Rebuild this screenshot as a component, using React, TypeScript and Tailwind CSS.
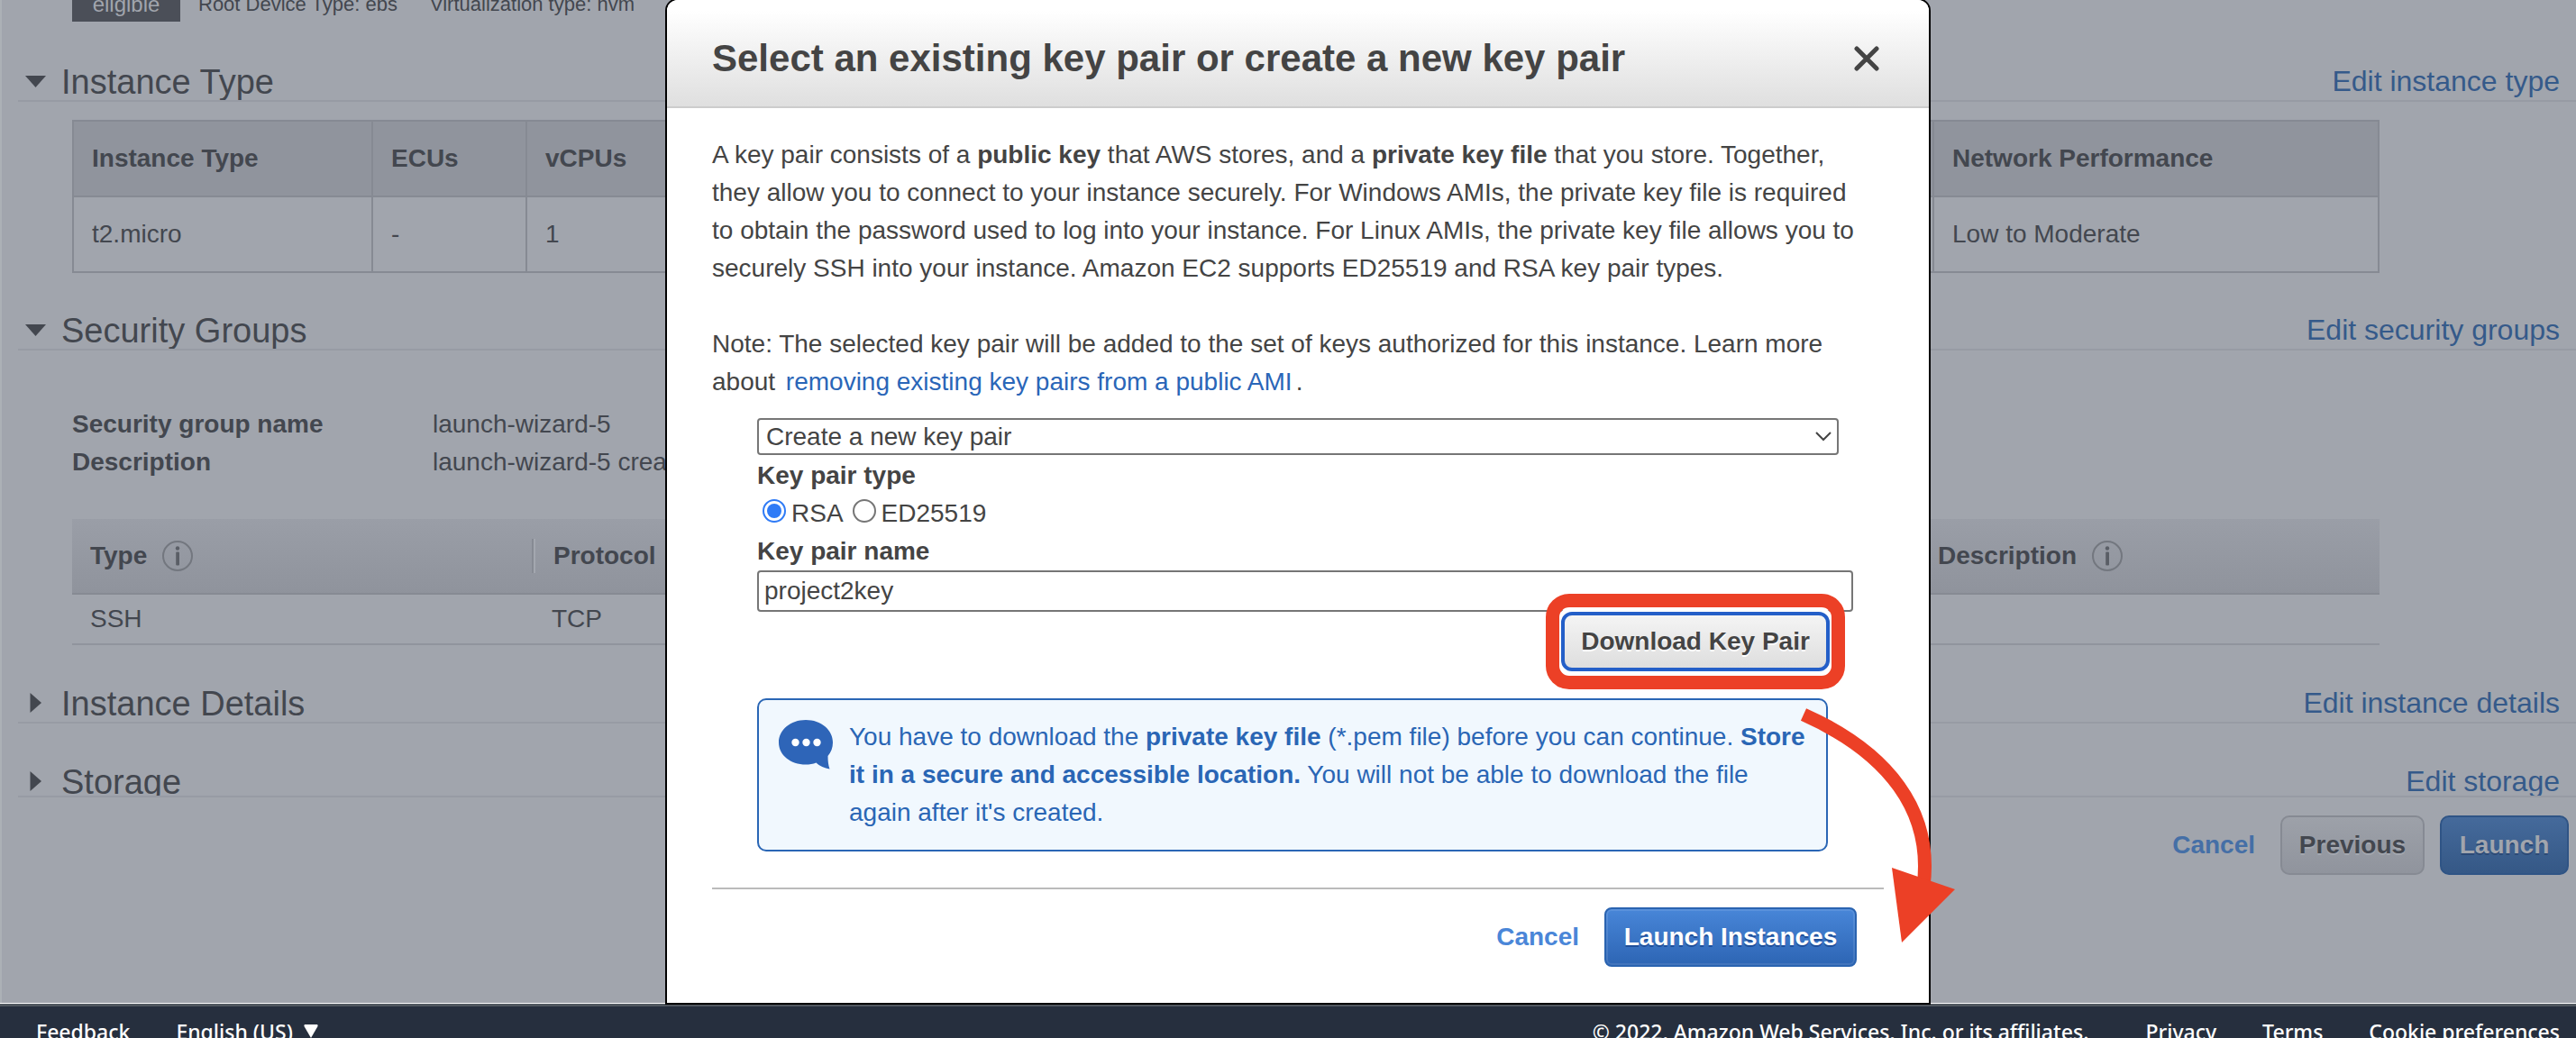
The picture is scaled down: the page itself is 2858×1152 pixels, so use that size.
import React from "react";

function InfoIcon() {
  return (
    <svg className="size-9" viewBox="0 0 36 36" fill="none" aria-hidden="true">
      <circle cx="18" cy="18" r="16" stroke="#73777f" strokeWidth="2" />
      <circle cx="18" cy="9.5" r="2.2" fill="#5a5e66" />
      <rect x="16.2" y="13.5" width="3.8" height="15" rx="1" fill="#5a5e66" />
    </svg>
  );
}

function SectionHeader({
  title,
  link,
  open = false,
  className,
}: {
  title: string;
  link: string;
  open?: boolean;
  className: string;
}) {
  return (
    <header className={"ml-5 flex items-start overflow-hidden border-b-2 border-[#979ba4] pr-[18px] " + className}>
      <svg className="mt-2 ml-2 size-6 shrink-0" viewBox="0 0 24 24" fill="#43474f" aria-hidden="true">
        {open ? <path d="M0 5H23L11.5 18Z" /> : <path d="M5.5 0V22L18 11Z" />}
      </svg>
      <h2 className="ml-4 flex-1 text-[38px] leading-[40px]">{title}</h2>
      <a href="#edit" className="text-[32px] leading-[38px] text-[#355a8a]">
        {link}
      </a>
    </header>
  );
}

function ReviewPage() {
  return (
    <main className="flex flex-1 flex-col border-l-2 border-[#acb1b6]">
      <div className="-ml-0.5 flex flex-1 flex-col">
        <div className="-mt-5 ml-20 flex h-11 text-[22px] leading-[50px]">
          <span className="w-[120px] bg-[#4b4f58] text-center text-[24px] text-[#a1a5ad]">eligible</span>
          <span className="ml-5">Root Device Type: ebs</span>
          <span className="ml-9">Virtualization type: hvm</span>
        </div>

        <SectionHeader className="mt-[47px] h-[42px]" open title="Instance Type" link="Edit instance type" />
        <div className="mt-5 mr-[218px] ml-20">
          <table className="w-full table-fixed border-collapse text-left">
            <thead>
              <tr className="h-[84px] bg-[#90949d]">
                <th className="w-[332px] border-2 border-[#868a93] px-5">Instance Type</th>
                <th className="w-[171px] border-2 border-[#868a93] px-5">ECUs</th>
                <th className="border-2 border-[#868a93] px-5">vCPUs</th>
                <th className="w-[494px] border-2 border-[#868a93] px-5">Network Performance</th>
              </tr>
            </thead>
            <tbody>
              <tr className="h-[84px]">
                <td className="border-2 border-[#868a93] px-5">t2.micro</td>
                <td className="border-2 border-[#868a93] px-5">-</td>
                <td className="border-2 border-[#868a93] px-5">1</td>
                <td className="border-2 border-[#868a93] px-5">Low to Moderate</td>
              </tr>
            </tbody>
          </table>
        </div>

        <SectionHeader className="mt-11 h-[42px]" open title="Security Groups" link="Edit security groups" />
        <dl className="mt-[61px] ml-20 grid grid-cols-[400px_1fr]">
          <dt className="font-bold">Security group name</dt>
          <dd>launch-wizard-5</dd>
          <dt className="font-bold">Description</dt>
          <dd>launch-wizard-5 created</dd>
        </dl>
        <div className="mt-[42px] mr-[218px] ml-20">
          <table className="w-full table-fixed border-separate border-spacing-0 text-left">
            <thead>
              <tr className="h-[84px] bg-linear-to-b from-[#9a9ea7] to-[#8f939c]">
                <th className="w-[514px] border-b-2 border-[#868a93] p-0 pl-5">
                  <div className="flex items-center justify-between">
                    <span className="flex items-center gap-4">
                      Type <InfoIcon />
                    </span>
                    <span className="h-[38px] w-1 border-r-2 border-l-2 border-r-[#a3a7af] border-l-[#868a93]" />
                  </div>
                </th>
                <th className="border-b-2 border-[#868a93] p-0 pl-5">Protocol</th>
                <th className="w-[490px] border-b-2 border-[#868a93] p-0">
                  <span className="flex items-center gap-4">
                    Description <InfoIcon />
                  </span>
                </th>
              </tr>
            </thead>
            <tbody>
              <tr className="h-14">
                <td className="border-b-2 border-[#90949d] p-0 pl-5">SSH</td>
                <td className="border-b-2 border-[#90949d] p-0 pl-[18px]">TCP</td>
                <td className="border-b-2 border-[#90949d] p-0" />
              </tr>
            </tbody>
          </table>
        </div>

        <SectionHeader className="mt-[45px] h-[42px]" title="Instance Details" link="Edit instance details" />
        <SectionHeader className="mt-[45px] h-[37px]" title="Storage" link="Edit storage" />

        <div className="mt-5 flex items-center justify-end pr-2 font-bold">
          <a href="#cancel" className="text-[#456fa6]">
            Cancel
          </a>
          <button
            type="button"
            className="ml-7 h-[66px] w-[160px] rounded-[10px] border-2 border-[#868a93] bg-linear-to-b from-[#9da1a9] to-[#90949d] text-shadow-[0_2px_0_#a3a7af]"
          >
            Previous
          </button>
          <button
            type="button"
            className="ml-[17px] h-[66px] w-[143px] rounded-[10px] border-2 border-[#2f5485] bg-linear-to-b from-[#456a9b] to-[#355886] text-[#a1a5ad] text-shadow-[0_2px_0_#2c4a76]"
          >
            Launch
          </button>
        </div>
      </div>
    </main>
  );
}

function PageFooter() {
  return (
    <footer className="flex h-[38px] shrink-0 gap-[51px] overflow-hidden border-t-[3px] border-[#50575f] bg-[#262f3e] px-10 pr-[18px] font-['Noto_Sans','Open_Sans',sans-serif] text-[23px] leading-[56px] font-medium whitespace-nowrap text-white">
      <a href="#feedback">Feedback</a>
      <button type="button" className="flex h-14 items-start">
        English (US)
        <svg className="mt-5 ml-3 h-4 w-4" viewBox="0 0 16 16" fill="white" aria-hidden="true">
          <path d="M1 0H15Q16 1 15.5 2L8 15L.5 2Q0 1 1 0Z" />
        </svg>
      </button>
      <span className="ml-auto">© 2022, Amazon Web Services, Inc. or its affiliates.</span>
      <a href="#privacy" className="ml-3">
        Privacy
      </a>
      <a href="#terms">Terms</a>
      <a href="#cookies">Cookie preferences</a>
    </footer>
  );
}

function Annotation() {
  return (
    <svg
      className="pointer-events-none absolute top-[784px] left-[1254px] h-[266px] w-[180px]"
      viewBox="1994 784 180 266"
      fill="none"
      aria-hidden="true"
    >
      <path d="M2001 793C2095 835 2145 900 2134 984" stroke="#ec4026" strokeWidth="15" />
      <path d="M2099 963L2169 987L2110 1046Z" fill="#ec4026" />
    </svg>
  );
}

const RADIO =
  "mx-1.5 mt-[5px] size-[26px] appearance-none rounded-full border-2 border-[#767676] bg-clip-content p-[3px] checked:border-[#2f7bf6] checked:bg-[#2f7bf6]";

function KeyPairDialog() {
  return (
    <section
      role="dialog"
      aria-labelledby="dialog-title"
      className="relative -mt-0.5 w-[1404px] self-start rounded-t-[14px] border-2 border-black bg-white text-[#444]"
    >
      <header className="flex h-[120px] items-center justify-between rounded-t-xl border-b-2 border-[#ccc] bg-linear-to-b from-white from-10% to-[#dfdfdf] pt-3 pr-[55px] pl-[50px]">
        <h1 id="dialog-title" className="text-[42px] leading-[50px] font-bold">
          Select an existing key pair or create a new key pair
        </h1>
        <button type="button" aria-label="Close">
          <svg className="size-7" viewBox="0 0 28 28" stroke="#444" strokeWidth="5" strokeLinecap="round">
            <path d="M3 3L25 25M25 3L3 25" />
          </svg>
        </button>
      </header>

      <div className="px-[50px] pt-[31px] pb-10">
        <p>
          A key pair consists of a <b>public key</b> that AWS stores, and a <b>private key file</b> that you store.
          Together,
          <br />
          they allow you to connect to your instance securely. For Windows AMIs, the private key file is required
          <br />
          to obtain the password used to log into your instance. For Linux AMIs, the private key file allows you to
          <br />
          securely SSH into your instance. Amazon EC2 supports ED25519 and RSA key pair types.
        </p>
        <p className="mt-[42px]">
          Note: The selected key pair will be added to the set of keys authorized for this instance. Learn more
          <br />
          about{" "}
          <a href="#removing" className="mx-1 text-[#2a66b8]">
            removing existing key pairs from a public AMI
          </a>
          .
        </p>

        <form className="mt-[19px] ml-[50px]" onSubmit={(e) => e.preventDefault()}>
          <div className="relative w-[1200px]">
            <select
              aria-label="Key pair option"
              className="block h-[41px] w-full appearance-none rounded-[4px] border-2 border-[#767676] bg-white pl-2 leading-[36px]"
            >
              <option>Create a new key pair</option>
            </select>
            <svg
              className="pointer-events-none absolute top-[14px] right-2 h-3 w-[18px]"
              viewBox="0 0 18 12"
              fill="none"
              stroke="#444"
              strokeWidth="2"
              aria-hidden="true"
            >
              <path d="M1 2L9 10L17 2" />
            </svg>
          </div>

          <fieldset>
            <legend className="pt-0.5 font-bold">Key pair type</legend>
            <div className="flex">
              <label className="flex">
                <input type="radio" name="type" defaultChecked className={RADIO} />
                RSA
              </label>
              <label className="ml-1 flex">
                <input type="radio" name="type" className={RADIO} />
                ED25519
              </label>
            </div>
          </fieldset>

          <label htmlFor="key-name" className="block font-bold">
            Key pair name
          </label>
          <input
            id="key-name"
            type="text"
            defaultValue="project2key"
            className="block h-[46px] w-[1216px] rounded-[4px] border-2 border-[#767676] px-1.5"
          />

          <div className="flex w-[1190px] justify-end">
            <div className="relative">
              <button
                type="button"
                className="h-[66px] w-[298px] rounded-xl border-4 border-[#245fc8] bg-linear-to-b from-[#f4f4f4] to-[#dedede] font-bold ring-5 ring-white text-shadow-[0_2px_0_white]"
              >
                Download Key Pair
              </button>
              <span className="pointer-events-none absolute -inset-x-[17px] -inset-y-5 rounded-[26px] border-[15px] border-[#ec4026]" />
            </div>
          </div>

          <div className="mt-[30px] flex w-[1188px] rounded-[10px] border-2 border-[#2a66b5] bg-[#f1f8fe] py-5 pl-[22px] text-[#2a66b5]">
            <svg className="mt-0.5 h-[55px] w-[60px] shrink-0" viewBox="0 0 60 55" fill="#2e65b8" aria-hidden="true">
              <path d="M30 0C47 0 60 11 60 25C60 31 58 36 54.5 40C54.5 46 55 50 56.5 54.5C51 53.5 45 51 41.5 47.5C38 49 34 49.5 30 49.5C13 49.5 0 39 0 25C0 11 13 0 30 0Z" />
              <circle cx="18.5" cy="25" r="4.2" fill="white" />
              <circle cx="30.5" cy="25" r="4.2" fill="white" />
              <circle cx="42.5" cy="25" r="4.2" fill="white" />
            </svg>
            <p className="ml-[18px] whitespace-nowrap">
              You have to download the <b>private key file</b> (*.pem file) before you can continue. <b>Store</b>
              <br />
              <b>it in a secure and accessible location.</b> You will not be able to download the file
              <br />
              again after it's created.
            </p>
          </div>
        </form>

        <hr className="mt-10 border-t-2 border-[#bbb]" />
        <div className="mt-5 flex items-center justify-end pr-[30px] font-bold">
          <a href="#cancel" className="text-[#4a86d8]">
            Cancel
          </a>
          <button
            type="button"
            className="ml-7 h-[66px] w-[280px] rounded-lg border-2 border-[#2a63b0] bg-linear-to-b from-[#4886d8] to-[#2d65b4] text-white inset-ring-2 inset-ring-white/10 text-shadow-[0_2px_0_#1f4f9a]"
          >
            Launch Instances
          </button>
        </div>
      </div>
      <Annotation />
    </section>
  );
}

export default function App() {
  return (
    <div className="relative flex h-screen flex-col overflow-hidden bg-[#a1a5ad] font-['Liberation_Sans',Arial,sans-serif] text-[28px] leading-[42px] text-[#43474f]">
      <ReviewPage />
      <div className="h-px bg-white" />
      <PageFooter />
      <div className="absolute inset-0 flex justify-center overflow-hidden pl-[22px]">
        <KeyPairDialog />
      </div>
    </div>
  );
}
